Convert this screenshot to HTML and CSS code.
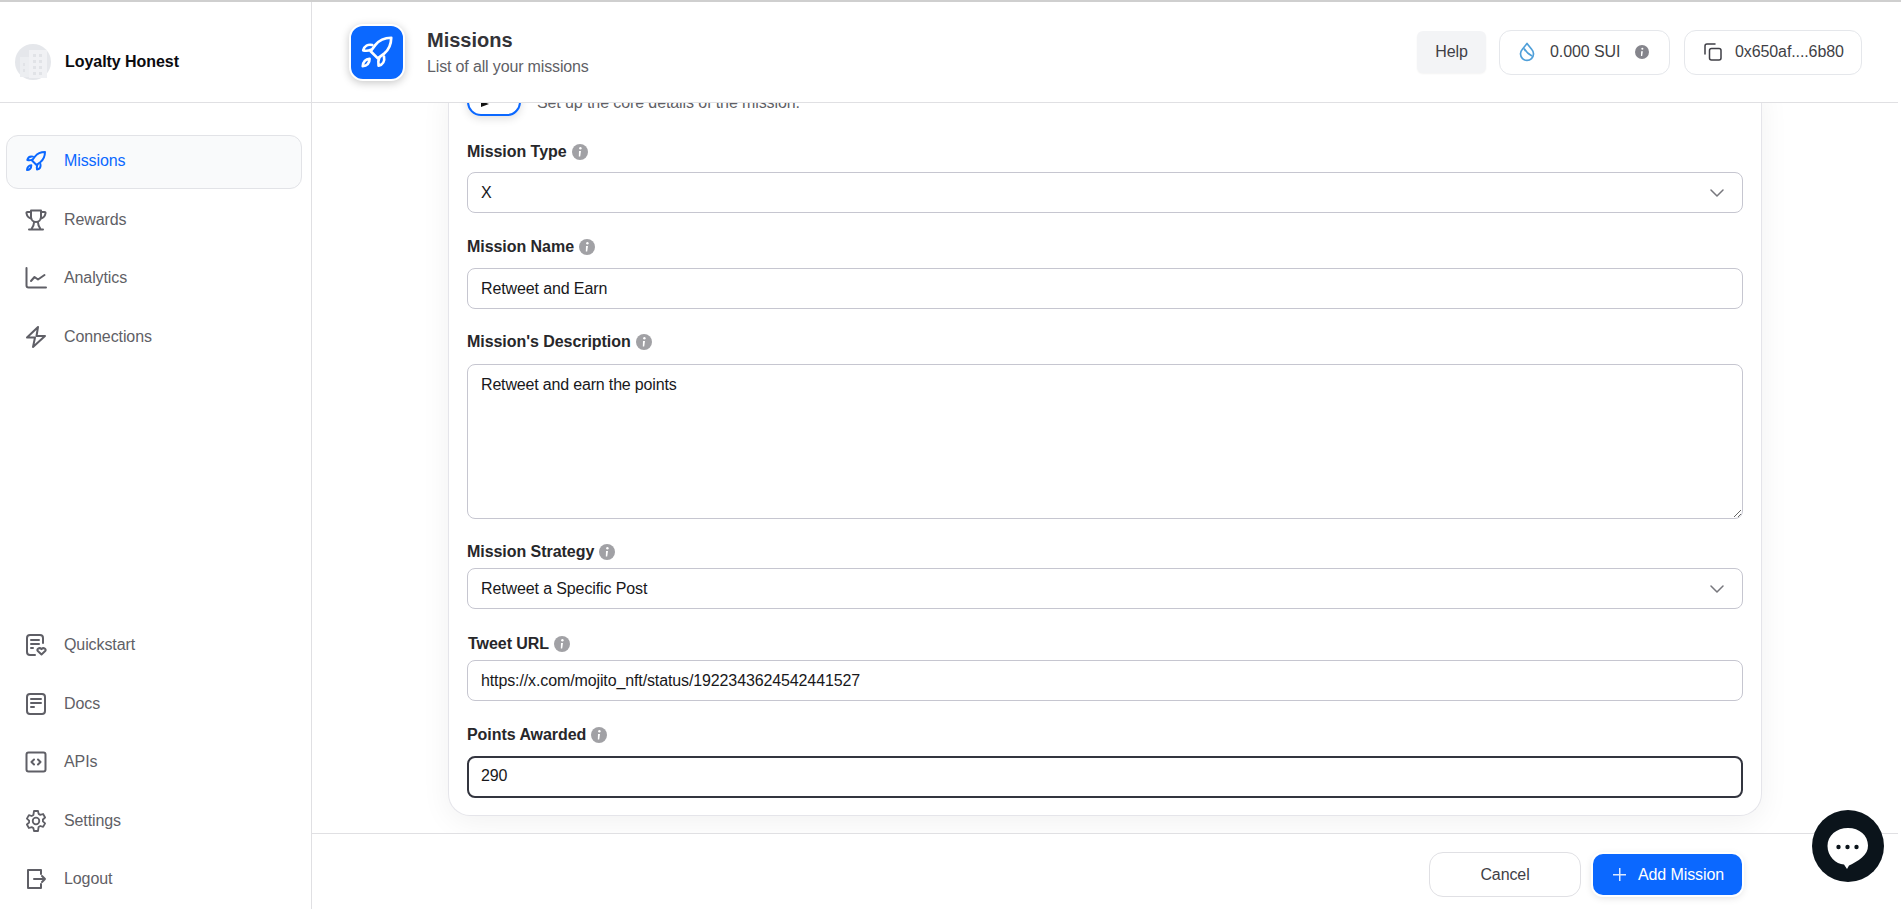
FILE: index.html
```html
<!DOCTYPE html>
<html lang="en">
<head>
<meta charset="utf-8">
<title>Missions</title>
<link rel="stylesheet" href="styles.css">
</head>
<body>
<svg class="defs" aria-hidden="true">
  <symbol id="rocket" viewBox="0 0 24 24" fill="none" stroke="currentColor" stroke-linejoin="round" stroke-linecap="round">
    <path d="M21 3c-4.400.1-7.800 1.700-10 4.500L8 11.500l4.500 4.500 4-3C19.300 10.800 20.900 7.400 21 3z"/>
    <path d="M9 7.600C6.400 7 4 8.200 3.300 11c2 .4 3.500.2 4.900-.4"/>
    <path d="M16.400 14.900c.6 2.600-.6 5-3.400 5.700-.4-2-.2-3.500.4-4.900"/>
    <path d="M3 21c.1-2.700 1.900-4.800 4.300-4.700.1 2.800-1.700 4.700-4.300 4.700z"/>
  </symbol>
  <symbol id="trophy" viewBox="0 0 24 24" fill="none" stroke="currentColor" stroke-width="2" stroke-linejoin="round" stroke-linecap="round">
    <path d="M7 2.500h10v6.500a5 5 0 0 1-10 0z"/>
    <path d="M7 4H3.500c-.8 0-1.200.6-1 1.400C3 8 4.500 10 7.300 10.500M17 4h3.500c.8 0 1.200.6 1 1.400-.5 2.600-2 4.600-4.800 5.100"/>
    <path d="M10 14.500c0 2.500-1 4.500-2.500 6.500M14 14.500c0 2.500 1 4.500 2.500 6.500M5 21.500h14"/>
  </symbol>
  <symbol id="chart" viewBox="0 0 24 24" fill="none" stroke="currentColor" stroke-width="2" stroke-linejoin="round" stroke-linecap="round">
    <path d="M2.500 2v17.500a2 2 0 0 0 2 2H22"/>
    <path d="M7 15l3.500-4 3.500 2.500L20.500 9"/>
  </symbol>
  <symbol id="bolt" viewBox="0 0 24 24" fill="none" stroke="currentColor" stroke-width="2" stroke-linejoin="round" stroke-linecap="round">
    <path d="M14 2L3 12.500h8L9 22l12-11h-8.500z"/>
  </symbol>
  <symbol id="quick" viewBox="0 0 24 24" fill="none" stroke="currentColor" stroke-width="2" stroke-linejoin="round" stroke-linecap="round">
    <path d="M19 10V5a3 3 0 0 0-3-3H6a3 3 0 0 0-3 3v14a3 3 0 0 0 3 3h5"/>
    <path d="M7 7h8M7 11h8M7 15h2"/>
    <path d="M17.500 21.500l-3.700-3.400c-1.700-1.900 1.600-4.200 3.700-2 2.100-2.200 5.400.1 3.700 2z"/>
  </symbol>
  <symbol id="doc" viewBox="0 0 24 24" fill="none" stroke="currentColor" stroke-width="2" stroke-linejoin="round" stroke-linecap="round">
    <rect x="3" y="2" width="18" height="20" rx="3"/>
    <path d="M7 7h10M7 11h10M7 15h3"/>
  </symbol>
  <symbol id="code" viewBox="0 0 24 24" fill="none" stroke="currentColor" stroke-width="2" stroke-linejoin="round" stroke-linecap="round">
    <rect x="2.500" y="2.500" width="19" height="19" rx="2"/>
    <path d="M10 9.500L7.500 12l2.500 2.500M14 9.500l2.500 2.500-2.500 2.500"/>
  </symbol>
  <symbol id="gear" viewBox="0 0 24 24" fill="none" stroke="currentColor" stroke-width="1.800" stroke-linejoin="round" stroke-linecap="round">
    <circle cx="12" cy="12" r="3.300"/>
    <path d="M10 2h4l.6 2.900 1.700 1 2.800-.9 2 3.500-2.200 2 0 1.900 2.200 2-2 3.500-2.800-.9-1.700 1L14 22h-4l-.6-2.900-1.700-1-2.800.9-2-3.500 2.200-2 0-1.900-2.200-2 2-3.500 2.800.9 1.700-1z"/>
  </symbol>
  <symbol id="logout" viewBox="0 0 24 24" fill="none" stroke="currentColor" stroke-width="2" stroke-linejoin="round" stroke-linecap="round">
    <path d="M17 7V3H4v18h13v-4"/>
    <path d="M10 12h11M18 9l3 3-3 3"/>
  </symbol>
  <symbol id="info" viewBox="0 0 16 16">
    <circle cx="8" cy="8" r="8" fill="currentColor"/>
    <circle cx="8.400" cy="4.300" r="1.200" fill="#fff"/>
    <path d="M7 7h2l-.8 5.500H6.800z" fill="#fff"/>
  </symbol>
  <symbol id="chevron" viewBox="0 0 14 8" fill="none" stroke="currentColor" stroke-width="1.500" stroke-linecap="round" stroke-linejoin="round">
    <path d="M1 1l6 6 6-6"/>
  </symbol>
</svg>

<div class="app">
  <aside class="sidebar">
    <div class="brand">
      <svg class="avatar" viewBox="0 0 36 36">
        <circle cx="18" cy="18" r="18" fill="#e5e7eb"/>
        <rect x="5" y="13" width="11" height="20" fill="#eceef1"/>
        <rect x="14" y="6" width="18" height="28" fill="#f0f1f4"/>
        <path d="M18 10h3v3h-3zM24 10h3v3h-3zM18 16h3v3h-3zM24 16h3v3h-3zM18 22h3v3h-3zM24 22h3v3h-3zM18 28h3v3h-3zM24 28h3v3h-3zM8 19h2v3H8zM8 25h2v3H8z" fill="#e1e3e7"/>
      </svg>
      <span class="brand-name">Loyalty Honest</span>
    </div>
    <nav class="nav">
      <a class="nav-item active"><svg class="nav-icon"><use href="#rocket"/></svg>Missions</a>
      <a class="nav-item"><svg class="nav-icon"><use href="#trophy"/></svg>Rewards</a>
      <a class="nav-item"><svg class="nav-icon"><use href="#chart"/></svg>Analytics</a>
      <a class="nav-item"><svg class="nav-icon"><use href="#bolt"/></svg>Connections</a>
    </nav>
    <nav class="nav nav-bottom">
      <a class="nav-item"><svg class="nav-icon"><use href="#quick"/></svg>Quickstart</a>
      <a class="nav-item"><svg class="nav-icon"><use href="#doc"/></svg>Docs</a>
      <a class="nav-item"><svg class="nav-icon"><use href="#code"/></svg>APIs</a>
      <a class="nav-item"><svg class="nav-icon"><use href="#gear"/></svg>Settings</a>
      <a class="nav-item"><svg class="nav-icon"><use href="#logout"/></svg>Logout</a>
    </nav>
  </aside>

  <main class="main">
    <header class="topbar">
      <div class="page-icon"><svg class="page-rocket"><use href="#rocket"/></svg></div>
      <div class="page-head">
        <h1 class="page-title">Missions</h1>
        <p class="page-sub">List of all your missions</p>
      </div>
      <div class="top-actions">
        <button class="help">Help</button>
        <div class="pill pill-sui">
          <svg class="drop" viewBox="0 0 16 20" fill="none" stroke="#4f9fd9" stroke-width="1.700" stroke-linejoin="round">
            <path d="M8 1.500l4.800 6a6.500 6.500 0 1 1-9.600 0z"/>
            <path d="M5 6.500c2 3.500 4 5.500 8 7.500"/>
          </svg>
          <span>0.000 SUI</span>
          <svg class="pill-info"><use href="#info"/></svg>
        </div>
        <div class="pill pill-addr">
          <svg class="copy" viewBox="0 0 18 18" fill="none" stroke="#3f3f46" stroke-width="1.500" stroke-linejoin="round" stroke-linecap="round">
            <rect x="5.500" y="5.500" width="11.500" height="11.500" rx="2"/>
            <path d="M1 11V3a2 2 0 0 1 2-2h8"/>
          </svg>
          <span>0x650af....6b80</span>
        </div>
      </div>
    </header>

    <section class="content">
      <form class="card">
        <div class="step">
          <div class="step-icon"><span class="step-mark"></span></div>
          <p class="step-text">Set up the core details of the mission.</p>
        </div>

        <div class="field field-type">
          <label class="label">Mission Type <svg class="info"><use href="#info"/></svg></label>
          <div class="select-wrap">
            <select class="control"><option>X</option></select>
            <svg class="chevron"><use href="#chevron"/></svg>
          </div>
        </div>

        <div class="field field-name">
          <label class="label">Mission Name <svg class="info"><use href="#info"/></svg></label>
          <input class="control" value="Retweet and Earn">
        </div>

        <div class="field field-desc">
          <label class="label">Mission's Description <svg class="info"><use href="#info"/></svg></label>
          <textarea class="control area">Retweet and earn the points</textarea>
        </div>

        <div class="field field-strategy">
          <label class="label">Mission Strategy <svg class="info"><use href="#info"/></svg></label>
          <div class="select-wrap">
            <select class="control"><option>Retweet a Specific Post</option></select>
            <svg class="chevron"><use href="#chevron"/></svg>
          </div>
        </div>

        <div class="field field-url">
          <label class="label label-shift">Tweet URL <svg class="info"><use href="#info"/></svg></label>
          <input class="control" value="https://x.com/mojito_nft/status/1922343624542441527">
        </div>

        <div class="field field-points">
          <label class="label">Points Awarded <svg class="info"><use href="#info"/></svg></label>
          <input class="control focused" value="290">
        </div>
      </form>
    </section>

    <footer class="footer">
      <button class="btn-cancel">Cancel</button>
      <button class="btn-add"><span class="plus"></span>Add Mission</button>
    </footer>
  </main>
</div>

<button class="chat" aria-label="Chat">
  <svg viewBox="0 0 42 42" class="chat-icon">
    <path d="M21 1C9.500 1 .500 8.500.500 19S9 37 17 37.500l3 4.500 2-3.500c4-2 9-4.500 13-8 4-3.500 6-7 6-12C41 8.500 32.500 1 21 1z" fill="#fff"/>
    <circle cx="11.500" cy="20" r="2.200" fill="#0b141b"/>
    <circle cx="20.500" cy="20" r="2.200" fill="#0b141b"/>
    <circle cx="29.500" cy="20" r="2.200" fill="#0b141b"/>
  </svg>
</button>
</body>
</html>
```

FILE: styles.css
```css
* { box-sizing: border-box; }

html, body { height: 100%; }

body {
  margin: 0;
  border-top: 2px solid #cfcfcf;
  font-family: "Liberation Sans", Arial, sans-serif;
  font-size: 16px;
  letter-spacing: -.1px;
  color: #27272a;
  background: #fff;
  overflow: hidden;
}

.defs { display: none; }

.app {
  display: flex;
  height: 907px;
}

/* Sidebar */
.sidebar {
  width: 312px;
  flex: none;
  display: flex;
  flex-direction: column;
  border-right: 1px solid #e0e0e3;
}

.brand {
  height: 101px;
  flex: none;
  display: flex;
  align-items: center;
  gap: 14px;
  padding: 19px 0 0 15px;
  border-bottom: 1px solid #e0e0e3;
}

.avatar { width: 36px; height: 36px; flex: none; }

.brand-name {
  font-weight: 700;
  letter-spacing: -.05px;
  color: #0b0b0f;
}

.nav {
  display: flex;
  flex-direction: column;
  gap: 4.500px;
  padding: 32px 9px 0 6px;
}

.nav-bottom {
  margin-top: auto;
  padding-top: 0;
  padding-bottom: 2px;
}

.nav-item {
  height: 54px;
  display: flex;
  align-items: center;
  gap: 16px;
  padding: 0 0 2px 17px;
  border: 1px solid transparent;
  border-radius: 12px;
  color: #5f5f66;
}

.nav-item.active {
  color: #0b68ff;
  background: #f9fafb;
  border-color: #e2e3e7;
}

.nav-icon {
  width: 24px;
  height: 24px;
  flex: none;
  stroke-width: 2;
}

/* Main */
.main {
  flex: 1;
  min-width: 0;
  display: flex;
  flex-direction: column;
  margin-right: 3px;
}

.topbar {
  height: 101px;
  flex: none;
  display: flex;
  align-items: center;
  padding: 0 36px 0 37px;
  border-bottom: 1px solid #e0e0e3;
  background: #fff;
}

.page-icon {
  width: 56px;
  height: 57px;
  flex: none;
  display: flex;
  align-items: center;
  justify-content: center;
  background: #0b68ff;
  border: 2px solid #fff;
  border-radius: 14px;
  box-shadow: 0 2px 8px rgba(0, 0, 0, .22);
}

.page-rocket {
  width: 38px;
  height: 38px;
  color: #fff;
  stroke-width: 1.700;
}

.page-head { margin-left: 22px; }

.page-title {
  margin: 1px 0 0;
  font-size: 20px;
  line-height: 26px;
  font-weight: 700;
  letter-spacing: 0;
  color: #333338;
}

.page-sub {
  margin: 2px 0 0;
  line-height: 24px;
  letter-spacing: -.15px;
  color: #5f5f66;
}

.top-actions {
  margin-left: auto;
  display: flex;
  align-items: center;
}

.help {
  width: 69px;
  height: 42px;
  margin-right: 13px;
  border: 0;
  border-radius: 6px;
  background: #f3f4f6;
  font: inherit;
  letter-spacing: inherit;
  color: #3f3f46;
  box-shadow: 0 1px 2px rgba(0, 0, 0, .05);
}

.pill {
  height: 45px;
  display: flex;
  align-items: center;
  border: 1px solid #e5e7eb;
  border-radius: 12px;
  color: #3f3f46;
}

.pill-sui {
  width: 171px;
  padding-left: 19px;
  margin-right: 14px;
}

.pill-addr {
  width: 178px;
  padding-left: 19px;
}

.drop { width: 16px; height: 20px; margin-right: 15px; flex: none; }
.pill-info { width: 14px; height: 14px; margin-left: 15px; color: #85858c; flex: none; }
.copy { width: 18px; height: 18px; margin-right: 13px; flex: none; }

/* Form */
.content {
  flex: 1;
  min-height: 0;
  overflow: hidden;
  display: flex;
  flex-direction: column;
  justify-content: flex-end;
  padding: 0 136px 17px 136px;
}

.card {
  flex: none;
  padding: 0 18px 17px 18px;
  background: #fff;
  border: 1px solid #e5e5ea;
  border-top: 0;
  border-radius: 0 0 22px 22px;
  box-shadow: 0 6px 30px rgba(0, 0, 0, .06);
}

.step {
  display: flex;
  align-items: flex-end;
  gap: 16px;
}

.step-icon {
  position: relative;
  width: 54px;
  height: 30px;
  border: 2px solid #0b68ff;
  border-top: 0;
  border-radius: 0 0 14px 14px;
  box-shadow: 0 3px 8px rgba(0, 0, 0, .12);
}

.step-mark {
  position: absolute;
  left: 12px;
  top: 15px;
  width: 0;
  height: 0;
  border-left: 8px solid #111;
  border-top: 3px solid transparent;
  border-bottom: 3px solid transparent;
}

.step-text {
  margin: 0 0 1px;
  line-height: 24px;
  color: #5f5f66;
}

.field { display: flex; flex-direction: column; }

.field-type { margin-top: 24px; gap: 8px; }
.field-name { margin-top: 22px; gap: 9px; }
.field-desc { margin-top: 21px; gap: 10px; }
.field-strategy { margin-top: 21px; gap: 4px; }
.field-url { margin-top: 23px; gap: 4px; }
.field-points { margin-top: 22px; gap: 9px; }

.label {
  display: flex;
  align-items: center;
  gap: 5px;
  height: 24px;
  font-weight: 700;
  letter-spacing: -.05px;
  color: #27272a;
}

.label-shift { padding-left: 1px; }

.info { width: 16px; height: 16px; color: #a1a1a5; flex: none; }

.control {
  display: block;
  width: 100%;
  height: 41px;
  padding: 0 13px;
  border: 1px solid #c6c6d0;
  border-radius: 8px;
  background: #fff;
  font: inherit;
  letter-spacing: -.12px;
  color: #18181b;
  outline: 0;
  appearance: none;
}

.area {
  height: 155px;
  padding-top: 10px;
  line-height: 20px;
  letter-spacing: -.17px;
  resize: vertical;
}

.focused {
  height: 42px;
  border: 2px solid #33353f;
  padding: 0 12px 2px;
}

.select-wrap { position: relative; }

.chevron {
  position: absolute;
  right: 19px;
  top: 17px;
  width: 14px;
  height: 8px;
  color: #77777d;
  pointer-events: none;
}

/* Footer */
.footer {
  height: 76px;
  flex: none;
  display: flex;
  align-items: center;
  justify-content: flex-end;
  gap: 12px;
  padding: 6px 156px 0 0;
  border-top: 1px solid #e0e0e3;
}

.btn-cancel {
  width: 152px;
  height: 45px;
  border: 1px solid #e0e0e4;
  border-radius: 14px;
  background: #fff;
  font: inherit;
  letter-spacing: inherit;
  color: #3f3f46;
}

.btn-add {
  width: 149px;
  height: 41px;
  display: flex;
  align-items: center;
  justify-content: center;
  gap: 12px;
  padding: 0 0 0 2px;
  border: 0;
  border-radius: 10px;
  background: #0b68ff;
  font: inherit;
  letter-spacing: inherit;
  color: #fff;
  box-shadow: 0 0 0 2px #fff, 0 2px 8px rgba(0, 0, 0, .15);
}

.plus {
  position: relative;
  width: 13px;
  height: 13px;
  background:
    linear-gradient(#dbe8ff, #dbe8ff) center / 13px 1.500px no-repeat,
    linear-gradient(#dbe8ff, #dbe8ff) center / 1.500px 13px no-repeat;
}

/* Chat launcher */
.chat {
  position: fixed;
  left: 1812px;
  top: 810px;
  width: 72px;
  height: 72px;
  padding: 0;
  border: 0;
  border-radius: 50%;
  background: #0b141b;
  display: flex;
  align-items: center;
  justify-content: center;
}

.chat-icon { width: 42px; height: 42px; margin-top: 3px; }
```
